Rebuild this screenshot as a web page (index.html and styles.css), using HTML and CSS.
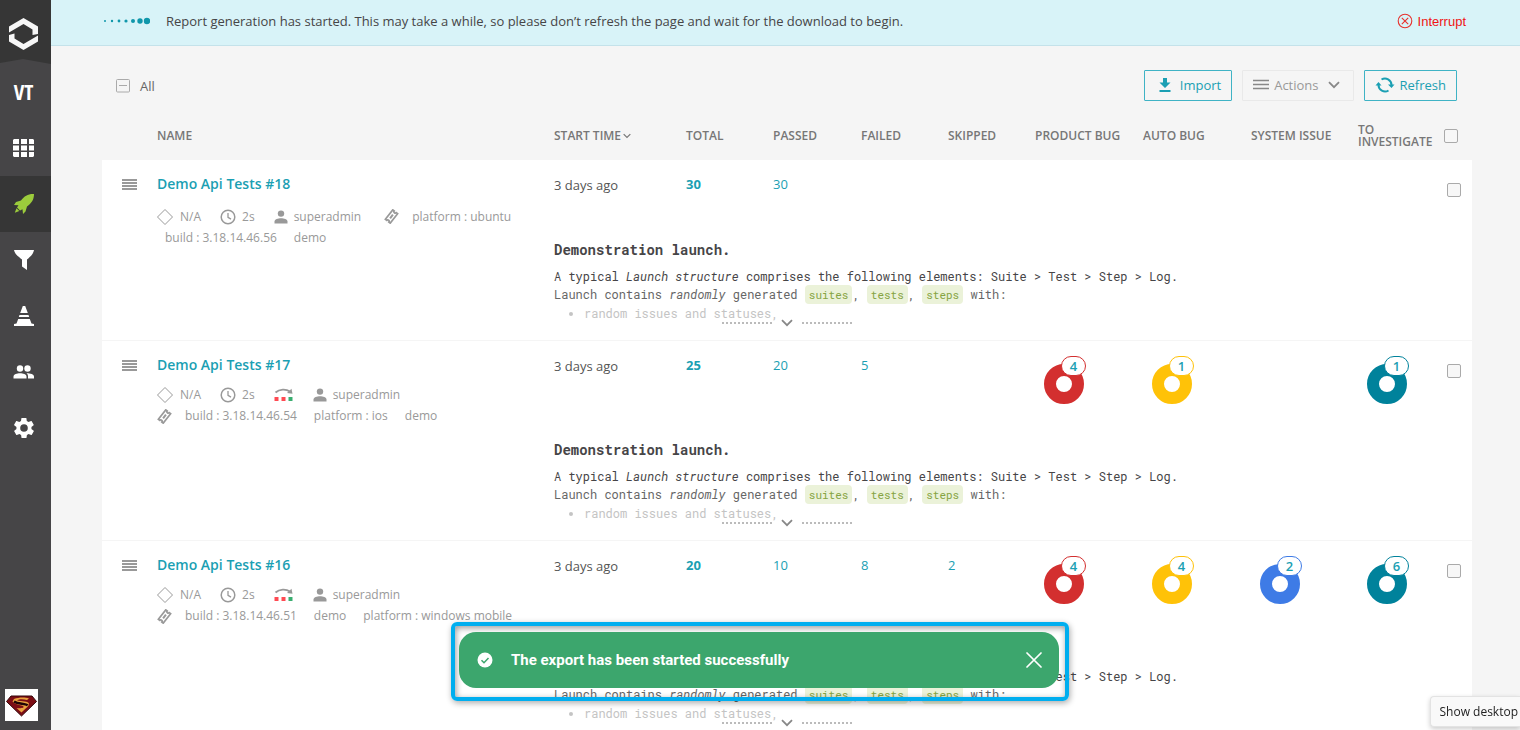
FILE: index.html
```
<!DOCTYPE html>
<html lang="en">
<head>
<meta charset="utf-8">
<title>Launches</title>
<link rel="stylesheet" href="styles.css">
</head>
<body>
<svg class="sprite" aria-hidden="true">
  <symbol id="i-menu" viewBox="0 0 16 12"><path d="M0 1h15M0 4h15M0 7h15M0 10h15" stroke="currentColor" stroke-width="2"/></symbol>
  <symbol id="i-diamond" viewBox="0 0 16 16"><path d="M8 .5l7.500 7.500L8 15.500.5 8z" fill="none" stroke="currentColor"/></symbol>
  <symbol id="i-clock" viewBox="0 0 16 16"><circle cx="8" cy="8" r="6.800" fill="none" stroke="currentColor" stroke-width="1.500"/><path d="M8 4v4.300l3 1.800" fill="none" stroke="currentColor" stroke-width="1.300"/></symbol>
  <symbol id="i-user" viewBox="0 0 14 14"><circle cx="7" cy="3.600" r="3.200" fill="currentColor"/><path d="M.5 13.500v-2C.5 9.300 4 8.300 7 8.300s6.500 1 6.500 3.200v2z" fill="currentColor"/></symbol>
  <symbol id="i-tag" viewBox="0 0 15 15"><g transform="rotate(-52 7.500 7.500)" fill="none" stroke="currentColor" stroke-width="1.700"><path d="M1.500 4.400h12v1.800a1.300 1.300 0 0 0 0 2.600v1.800h-12V8.800a1.300 1.300 0 0 0 0-2.600z"/><path d="M5.200 7.500h4.600" stroke-width="2"/></g></symbol>
  <symbol id="i-retry" viewBox="0 0 20 14"><path d="M1.500 4.500C5.500.800 12 .800 16 3.500" fill="none" stroke="#999" stroke-width="1.800"/><path d="M17.500.800l1 5-5.500-.8z" fill="#999"/><path d="M.5 9h4v4h-4zM7.500 9h4v4h-4z" fill="#ff4a52"/><path d="M14.500 9h4v4h-4z" fill="#3aae70"/></symbol>
  <symbol id="i-down" viewBox="0 0 12 8"><path d="M1 1.200l5 5 5-5" fill="none" stroke="currentColor" stroke-width="1.800"/></symbol>
</svg>

<div class="app">
  <aside class="sidebar">
    <a class="logo" href="#" aria-label="Home">
      <svg width="51" height="64" viewBox="0 0 51 64"><path d="M0 0h51v64L23 59 0 63z" fill="#363636"/><path d="M9 32.500v-6L23.500 18 38 26.500V34l-5.500 1v-5.500L23.500 24z" fill="#f7f7f7"/><path d="M38 35.500v6L23.500 50 9 41.500V35l5.500-1.500v5L23.500 44z" fill="#f7f7f7"/></svg>
    </a>
    <nav class="nav">
      <a class="nav-link project" href="#">VT</a>
      <a class="nav-link" href="#" aria-label="Dashboards"><svg width="22" height="18" viewBox="0 0 22 18" fill="#fff"><path d="M1 0h5v5H0V1zM8 0h6v5H8zM16 0h4l1 1v4h-5zM0 6.500h6v5H0zM8 6.500h6v5H8zM16 6.500h5v5h-5zM0 13h6v5H1l-1-1zM8 13h6v5H8zM16 13h5v4l-1 1h-4z"/></svg></a>
      <a class="nav-link active" href="#" aria-label="Launches"><svg width="22" height="22" viewBox="0 0 22 22" fill="#9ccc3c"><path d="M21 1c-6-.3-9.500 2-13 6.500L3 9l-2 3 4.500.2L4 14.500l3 3 2.500-1.200L10 21l2.500-2.500 1.500-5C18.500 10 21 7 21 1z"/><path d="M3.500 15.200L1.800 19.800l4.500-1.700z"/></svg></a>
      <a class="nav-link" href="#" aria-label="Filters"><svg width="22" height="22" viewBox="0 0 22 22" fill="#fff"><path d="M1 1h20c-.5 4-4.500 7.500-7 9.500V21l-5-3.500v-7C6.500 8.500 1.500 5 1 1z"/></svg></a>
      <a class="nav-link" href="#" aria-label="Debug"><svg width="22" height="22" viewBox="0 0 22 22" fill="#fff"><path d="M9.800 1h2.400l2.600 7H7.200zM6.500 10h9l.7 2H5.800zM5.200 14h11.600l1.700 4.500 2.500.500V21H1v-2l2.500-.5z"/></svg></a>
      <a class="nav-link" href="#" aria-label="Members"><svg width="22" height="16" viewBox="0 0 22 16" fill="#fff"><circle cx="7" cy="4.500" r="3.200"/><circle cx="14.500" cy="4.500" r="3.200"/><path d="M.5 14.500v-2c0-2 3.500-3.200 6.500-3.200s6.500 1.200 6.500 3.200v2zM15 14.500v-2c0-1.500-.5-2.400-1.500-3.200 4 0 7.500 1.200 7.500 3.200v2z"/></svg></a>
      <a class="nav-link" href="#" aria-label="Settings"><svg width="24" height="24" viewBox="0 0 24 24" fill="#fff"><path d="M19.400 13c0-.3.100-.6.100-1s0-.7-.1-1l2.200-1.700c.2-.1.200-.4.100-.6l-2-3.500c-.1-.2-.4-.3-.6-.2l-2.600 1c-.5-.4-1.100-.7-1.700-1l-.4-2.700c0-.2-.2-.4-.5-.4h-4c-.2 0-.4.200-.5.400L9 5c-.6.200-1.200.6-1.700 1l-2.600-1c-.2-.1-.4 0-.6.200l-2 3.500c-.1.200-.1.500.1.600L4.500 11c0 .3-.1.600-.1 1s0 .7.100 1l-2.200 1.700c-.2.100-.2.400-.1.600l2 3.500c.1.200.4.300.6.200l2.600-1c.5.400 1.100.7 1.700 1l.4 2.700c0 .2.200.4.500.4h4c.2 0 .4-.2.500-.4l.4-2.700c.6-.2 1.200-.6 1.700-1l2.600 1c.2.100.4 0 .6-.2l2-3.500c.1-.2.100-.5-.1-.6zM12 15.800a3.800 3.800 0 1 1 0-7.600 3.800 3.800 0 0 1 0 7.600z"/></svg></a>
    </nav>
    <a class="avatar" href="#" aria-label="Profile">
      <svg width="33" height="32" viewBox="0 0 33 32"><path fill="#fff" d="M0 0h33v32H0z"/><path d="M6 7h21l4.500 5.500L16.500 27 1.500 12.500z" fill="#7c0d14" stroke="#33070a"/><path d="M9 10c5-2 11-2 15-.5l-2 1.500c-4-1-8-1-10 .5 4 1 12 .5 12 3.500 0 2-4 5-7.500 8.500L11.500 19c4 .5 8 0 7-1.500S10 16 7.500 12.500z" fill="#e9a23e"/><path d="M9 12.500c4 3 12 1.500 13.500 4" stroke="#1f0506" stroke-width="2.500" fill="none"/></svg>
    </a>
  </aside>

  <main class="main">
    <div class="banner" role="status">
      <svg class="dots" width="48" height="8" viewBox="0 0 48 8" fill="#1097ab"><circle cx="3" cy="4" r="1"/><circle cx="10" cy="4" r="1.200"/><circle cx="17" cy="4" r="1.400"/><circle cx="24" cy="4" r="1.600"/><circle cx="31" cy="4" r="2"/><circle cx="38" cy="4" r="2.700"/><circle cx="45" cy="4" r="3.200"/></svg>
      <span class="banner-text">Report generation has started. This may take a while, so please don’t refresh the page and wait for the download to begin.</span>
      <button class="interrupt" type="button"><svg width="16" height="16" viewBox="0 0 16 16" fill="none" stroke="#e8302c" stroke-width="1.100"><circle cx="8" cy="8" r="6.800"/><path d="M4.800 4.800l6.400 6.400M11.200 4.800l-6.400 6.400"/></svg>Interrupt</button>
    </div>

    <div class="toolbar">
      <button class="all" type="button"><svg width="14" height="14" viewBox="0 0 14 14" fill="none" stroke="#aaa"><rect x=".5" y=".5" width="13" height="12.500" rx="1"/><path d="M3 6.500h8"/></svg>All</button>
      <div class="buttons">
        <button class="btn import" type="button"><svg width="12" height="14" viewBox="0 0 12 14" fill="currentColor"><path d="M4 0h4v4.500h3.500L6 10 .5 4.500H4zM.5 12h11v2H.5z"/></svg>Import</button>
        <button class="btn actions" type="button" disabled><svg width="16" height="12" viewBox="0 0 16 12"><path d="M0 1.500h16M0 5.500h16M0 9.500h16" stroke="#888" stroke-width="1.500"/></svg>Actions<svg class="caret" width="12" height="8"><use href="#i-down"/></svg></button>
        <button class="btn refresh" type="button"><svg width="20" height="16" viewBox="0 0 20 16"><path d="M6.500 2.500a6.500 6.500 0 0 1 10 5.500M13.500 13.500A6.500 6.500 0 0 1 3.500 8" fill="none" stroke="currentColor" stroke-width="2"/><path d="M13 7.500h6.500L16.500 11zM.5 8.500h6L3.500 5z" fill="currentColor"/></svg>Refresh</button>
      </div>
    </div>

    <table class="launches">
      <colgroup><col class="c-menu"><col><col class="c-start"><col class="c-num"><col class="c-passed"><col class="c-num"><col class="c-num"><col class="c-defect"><col class="c-defect"><col class="c-system"><col class="c-inv"><col class="c-check"></colgroup>
      <thead>
        <tr><th></th><th>NAME</th><th>START TIME<svg class="sort" width="8" height="6"><use href="#i-down"/></svg></th><th>TOTAL</th><th>PASSED</th><th>FAILED</th><th>SKIPPED</th><th>PRODUCT BUG</th><th>AUTO BUG</th><th>SYSTEM ISSUE</th><th>TO INVESTIGATE</th><th class="check"><input type="checkbox" aria-label="Select all"></th></tr>
      </thead>
      <tbody class="launch">
        <tr class="stats">
          <td rowspan="2" class="menu"><svg width="16" height="12"><use href="#i-menu"/></svg></td>
          <td rowspan="2" class="name"><a href="#">Demo Api Tests #18</a>
            <div class="meta loose"><span class="item wide"><svg width="16" height="16"><use href="#i-diamond"/></svg>N/A</span><span class="item"><svg width="16" height="16"><use href="#i-clock"/></svg>2s</span><span class="item"><svg width="14" height="14"><use href="#i-user"/></svg>superadmin</span><span class="tags inline"><svg width="15" height="15"><use href="#i-tag"/></svg><span class="attr">platform : ubuntu</span></span></div>
            <div class="meta"><span class="attr">build : 3.18.14.46.56</span><span class="attr">demo</span></div></td>
          <td class="time">3 days ago</td><td><a class="total" href="#">30</a></td><td><a href="#">30</a></td><td></td><td></td><td></td><td></td><td></td><td></td><td class="check"><input type="checkbox" aria-label="Select Demo Api Tests #18"></td>
        </tr>
        <tr class="desc"><td colspan="10">
          <h3>Demonstration launch.</h3>
          <p>A typical <em>Launch structure</em> comprises the following elements: Suite &gt; Test &gt; Step &gt; Log.</p>
          <p class="dim">Launch contains <em>randomly</em> generated <code>suites</code>, <code>tests</code>, <code>steps</code> with:</p>
          <ul><li>random issues and statuses,</li></ul>
          <button class="expand" type="button" aria-label="Expand"><svg width="12" height="8"><use href="#i-down"/></svg></button></td></tr>
      </tbody>
      <tbody class="launch tall">
        <tr class="stats">
          <td rowspan="2" class="menu"><svg width="16" height="12"><use href="#i-menu"/></svg></td>
          <td rowspan="2" class="name"><a href="#">Demo Api Tests #17</a>
            <div class="meta"><span class="item wide"><svg width="16" height="16"><use href="#i-diamond"/></svg>N/A</span><span class="item"><svg width="16" height="16"><use href="#i-clock"/></svg>2s</span><svg width="20" height="14"><use href="#i-retry"/></svg><span class="item"><svg width="14" height="14"><use href="#i-user"/></svg>superadmin</span></div>
            <div class="meta tags"><svg width="15" height="15"><use href="#i-tag"/></svg><span class="attr">build : 3.18.14.46.54</span><span class="attr">platform : ios</span><span class="attr">demo</span></div></td>
          <td class="time">3 days ago</td><td><a class="total" href="#">25</a></td><td><a href="#">20</a></td><td><a href="#">5</a></td><td></td>
          <td><a class="donut product" href="#"><span>4</span></a></td><td><a class="donut auto" href="#"><span>1</span></a></td><td></td><td><a class="donut investigate" href="#"><span>1</span></a></td><td class="check"><input type="checkbox" aria-label="Select Demo Api Tests #17"></td>
        </tr>
        <tr class="desc"><td colspan="10">
          <h3>Demonstration launch.</h3>
          <p>A typical <em>Launch structure</em> comprises the following elements: Suite &gt; Test &gt; Step &gt; Log.</p>
          <p class="dim">Launch contains <em>randomly</em> generated <code>suites</code>, <code>tests</code>, <code>steps</code> with:</p>
          <ul><li>random issues and statuses,</li></ul>
          <button class="expand" type="button" aria-label="Expand"><svg width="12" height="8"><use href="#i-down"/></svg></button></td></tr>
      </tbody>
      <tbody class="launch tall">
        <tr class="stats">
          <td rowspan="2" class="menu"><svg width="16" height="12"><use href="#i-menu"/></svg></td>
          <td rowspan="2" class="name"><a href="#">Demo Api Tests #16</a>
            <div class="meta"><span class="item wide"><svg width="16" height="16"><use href="#i-diamond"/></svg>N/A</span><span class="item"><svg width="16" height="16"><use href="#i-clock"/></svg>2s</span><svg width="20" height="14"><use href="#i-retry"/></svg><span class="item"><svg width="14" height="14"><use href="#i-user"/></svg>superadmin</span></div>
            <div class="meta tags"><svg width="15" height="15"><use href="#i-tag"/></svg><span class="attr">build : 3.18.14.46.51</span><span class="attr">demo</span><span class="attr">platform : windows mobile</span></div></td>
          <td class="time">3 days ago</td><td><a class="total" href="#">20</a></td><td><a href="#">10</a></td><td><a href="#">8</a></td><td><a href="#">2</a></td>
          <td><a class="donut product" href="#"><span>4</span></a></td><td><a class="donut auto" href="#"><span>4</span></a></td><td><a class="donut system" href="#"><span>2</span></a></td><td><a class="donut investigate" href="#"><span>6</span></a></td><td class="check"><input type="checkbox" aria-label="Select Demo Api Tests #16"></td>
        </tr>
        <tr class="desc"><td colspan="10">
          <h3>Demonstration launch.</h3>
          <p>A typical <em>Launch structure</em> comprises the following elements: Suite &gt; Test &gt; Step &gt; Log.</p>
          <p class="dim">Launch contains <em>randomly</em> generated <code>suites</code>, <code>tests</code>, <code>steps</code> with:</p>
          <ul><li>random issues and statuses,</li></ul>
          <button class="expand" type="button" aria-label="Expand"><svg width="12" height="8"><use href="#i-down"/></svg></button></td></tr>
      </tbody>
    </table>
  </main>
</div>

<div class="toast-layer">
  <div class="toast-frame">
    <div class="toast" role="alert">
      <svg width="16" height="16" viewBox="0 0 16 16"><circle cx="8" cy="8" r="7.500" fill="#fff"/><path d="M4.500 8.200l2.500 2.500 4.500-4.700" fill="none" stroke="#3ca66d" stroke-width="1.500"/></svg>
      <span class="toast-text">The export has been started successfully</span>
      <button class="close" type="button" aria-label="Close"><svg width="16" height="16" viewBox="0 0 16 16"><path d="M1 1l14 14M15 1L1 15" stroke="#fff" stroke-width="1.700" stroke-linecap="round"/></svg></button>
    </div>
  </div>
</div>
<div class="tooltip">Show desktop</div>
</body>
</html>
```
FILE: styles.css
```
* { box-sizing: border-box; }
body {
  margin: 0;
  font-family: "Open Sans", "Noto Sans", sans-serif;
  font-size: 13px;
  color: #464547;
  background: #f5f5f5;
  overflow: hidden;
}
a { color: inherit; text-decoration: none; }
button { font: inherit; color: inherit; background: none; border: 0; padding: 0; margin: 0; }
svg { flex: none; display: block; }
.sprite { position: absolute; width: 0; height: 0; }

.app { display: flex; height: 100vh; }

/* Sidebar */
.sidebar { display: flex; flex-direction: column; flex: none; width: 51px; background: #464547; }
.nav { display: flex; flex-direction: column; flex: 1; }
.nav-link { display: flex; align-items: center; justify-content: center; height: 56px; padding-right: 4px; }
.nav-link.active { background: #363636; }
.project { color: #fff; font: bold 21px "Open Sans Condensed", "Liberation Sans Narrow", "Liberation Sans", sans-serif; }
.avatar { padding: 0 0 9px 5px; }

/* Main area */
.main { flex: 1; min-width: 0; overflow: hidden; }
.banner {
  display: flex;
  align-items: center;
  height: 46px;
  padding: 0 54px 3px 51px;
  background: #d8f3f8;
  border-bottom: 1px solid #c4e2ea;
}
.banner-text { flex: 1; margin-left: 16px; white-space: nowrap; }
.interrupt { display: flex; align-items: center; gap: 5px; color: #f01414; font: 13px "Liberation Sans", Arial, sans-serif; }

.toolbar { display: flex; align-items: center; justify-content: space-between; padding: 24px 63px 0 65px; }
.all { display: flex; align-items: center; gap: 10px; color: #666; }
.buttons { display: flex; gap: 10px; }
.btn {
  display: flex;
  align-items: center;
  height: 31px;
  padding: 0 10px 2px;
  border: 1px solid #3fb3c5;
  border-radius: 1px;
  color: #1b9fb3;
  font-size: 13px;
}
.import { padding-left: 14px; gap: 9px; }
.actions { gap: 5px; color: #999; border-color: #e9e9e9; padding-right: 13px; }
.caret { margin-left: 4px; color: #888; }
.refresh { gap: 5px; }

/* Launch table */
.launches { width: calc(100% - 99px); margin-left: 51px; border-collapse: collapse; table-layout: fixed; }
.c-menu { width: 55px; }
.c-start { width: 132px; }
.c-num { width: 87px; }
.c-passed { width: 88px; }
.c-defect { width: 108px; }
.c-system { width: 107px; }
.c-inv { width: 80px; }
.c-check { width: 34px; }
th { height: 59px; padding: 10px 0 0; text-align: left; vertical-align: middle; font-size: 12px; line-height: 12px; font-weight: 600; color: #777; }
.sort { display: inline-block; margin-left: 2px; vertical-align: 1px; }
td { padding: 0; vertical-align: top; }
input[type="checkbox"] {
  appearance: none;
  display: block;
  width: 14px;
  height: 14px;
  margin: 0;
  border: 1px solid #aaa;
  border-radius: 2px;
  background: #f7f7f7;
}
.check { padding-left: 6px; }
.launch { position: relative; background: #fff; border-bottom: 1px solid #f5f5f5; }
.stats { height: 79px; }
.tall .stats { height: 99px; }
.stats td { padding-top: 14px; line-height: 20px; font-size: 13px; color: #1b9fb3; }
.stats .time { padding-top: 15px; color: #555; }
.total { font-weight: 700; }
.stats .menu { padding: 19px 0 0 20px; color: #999; }
.stats .check { padding: 23px 0 0 9px; }
.stats .name > a { display: block; font-size: 14px; font-weight: 600; }
.meta { display: flex; align-items: center; gap: 19px; height: 21px; color: #999; font-size: 12px; white-space: nowrap; }
.name > a + .meta { margin-top: 10px; }
.name > a + .loose { margin-top: 12px; }
.item { display: flex; align-items: center; gap: 6px; }
.item.wide { gap: 7px; }
.tags, .tags.meta { display: flex; align-items: center; gap: 5px; }
.tags.inline { margin-left: 4px; }
.attr { padding: 0 8px; }
.meta > .attr + .attr { margin-left: -18px; }
.meta.tags > .attr + .attr { margin-left: -4px; }

.donut { display: block; position: relative; width: 40px; height: 40px; margin: 9px 0 0 9px; border: 12px solid; border-radius: 50%; }
.donut span {
  position: absolute;
  left: 5px;
  top: -20px;
  width: 25px;
  height: 20px;
  border: 1px solid;
  border-color: inherit;
  border-radius: 10px;
  background: #fff;
  color: #1b9fb3;
  font-weight: 600;
  line-height: 18px;
  text-align: center;
}
.donut.product { border-color: #d32f2f; }
.donut.auto { border-color: #ffc208; }
.donut.system { border-color: #3e7be6; }
.donut.investigate { border-color: #00829b; }

.desc { height: 101px; font: 12px/18px "Roboto Mono", "DejaVu Sans Mono", monospace; }
.desc h3 { margin: 1px 0 7px; font-size: 14px; line-height: 20px; font-weight: 700; }
.desc p { margin: 0; }
.desc .dim { color: #666; }
.desc code { padding: 2px 4px; border-radius: 4px; background: #ebf2d9; color: #86a443; font-family: inherit; font-size: 11px; }
.desc ul { margin: 0; padding-left: 30px; color: #c4c4c4; }
.expand { position: absolute; left: 0; right: 0; bottom: 12px; display: flex; justify-content: center; align-items: center; gap: 9px; margin: auto; color: #888; }
.expand::before, .expand::after { content: ""; width: 50px; border-top: 2px dotted #bbb; }

/* Floating layers */
.toast-layer { position: fixed; left: 0; right: 0; bottom: 29px; display: flex; justify-content: center; }
.toast-frame { width: 618px; padding: 6px 6px 9px 4px; border: 4px solid #00aeef; border-radius: 6px; box-shadow: 1px 2px 6px #0005, inset 1px 2px 6px #0006; }
.toast { display: flex; align-items: center; height: 56px; padding: 0 17px 0 18px; border-radius: 17px; background: #3ca66d; }
.toast-text { flex: 1; margin-left: 18px; color: #fff; font: bold 15px Roboto, sans-serif; }
.tooltip { position: fixed; right: 0; bottom: 3px; padding: 0 2px 0 8px; border: 1px solid #e3e3e3; border-right: 0; border-radius: 4px 0 0 4px; background: #f9f9f9; box-shadow: 0 2px 5px #0003; color: #222; font: 12px/29px "Open Sans", sans-serif; }
```
